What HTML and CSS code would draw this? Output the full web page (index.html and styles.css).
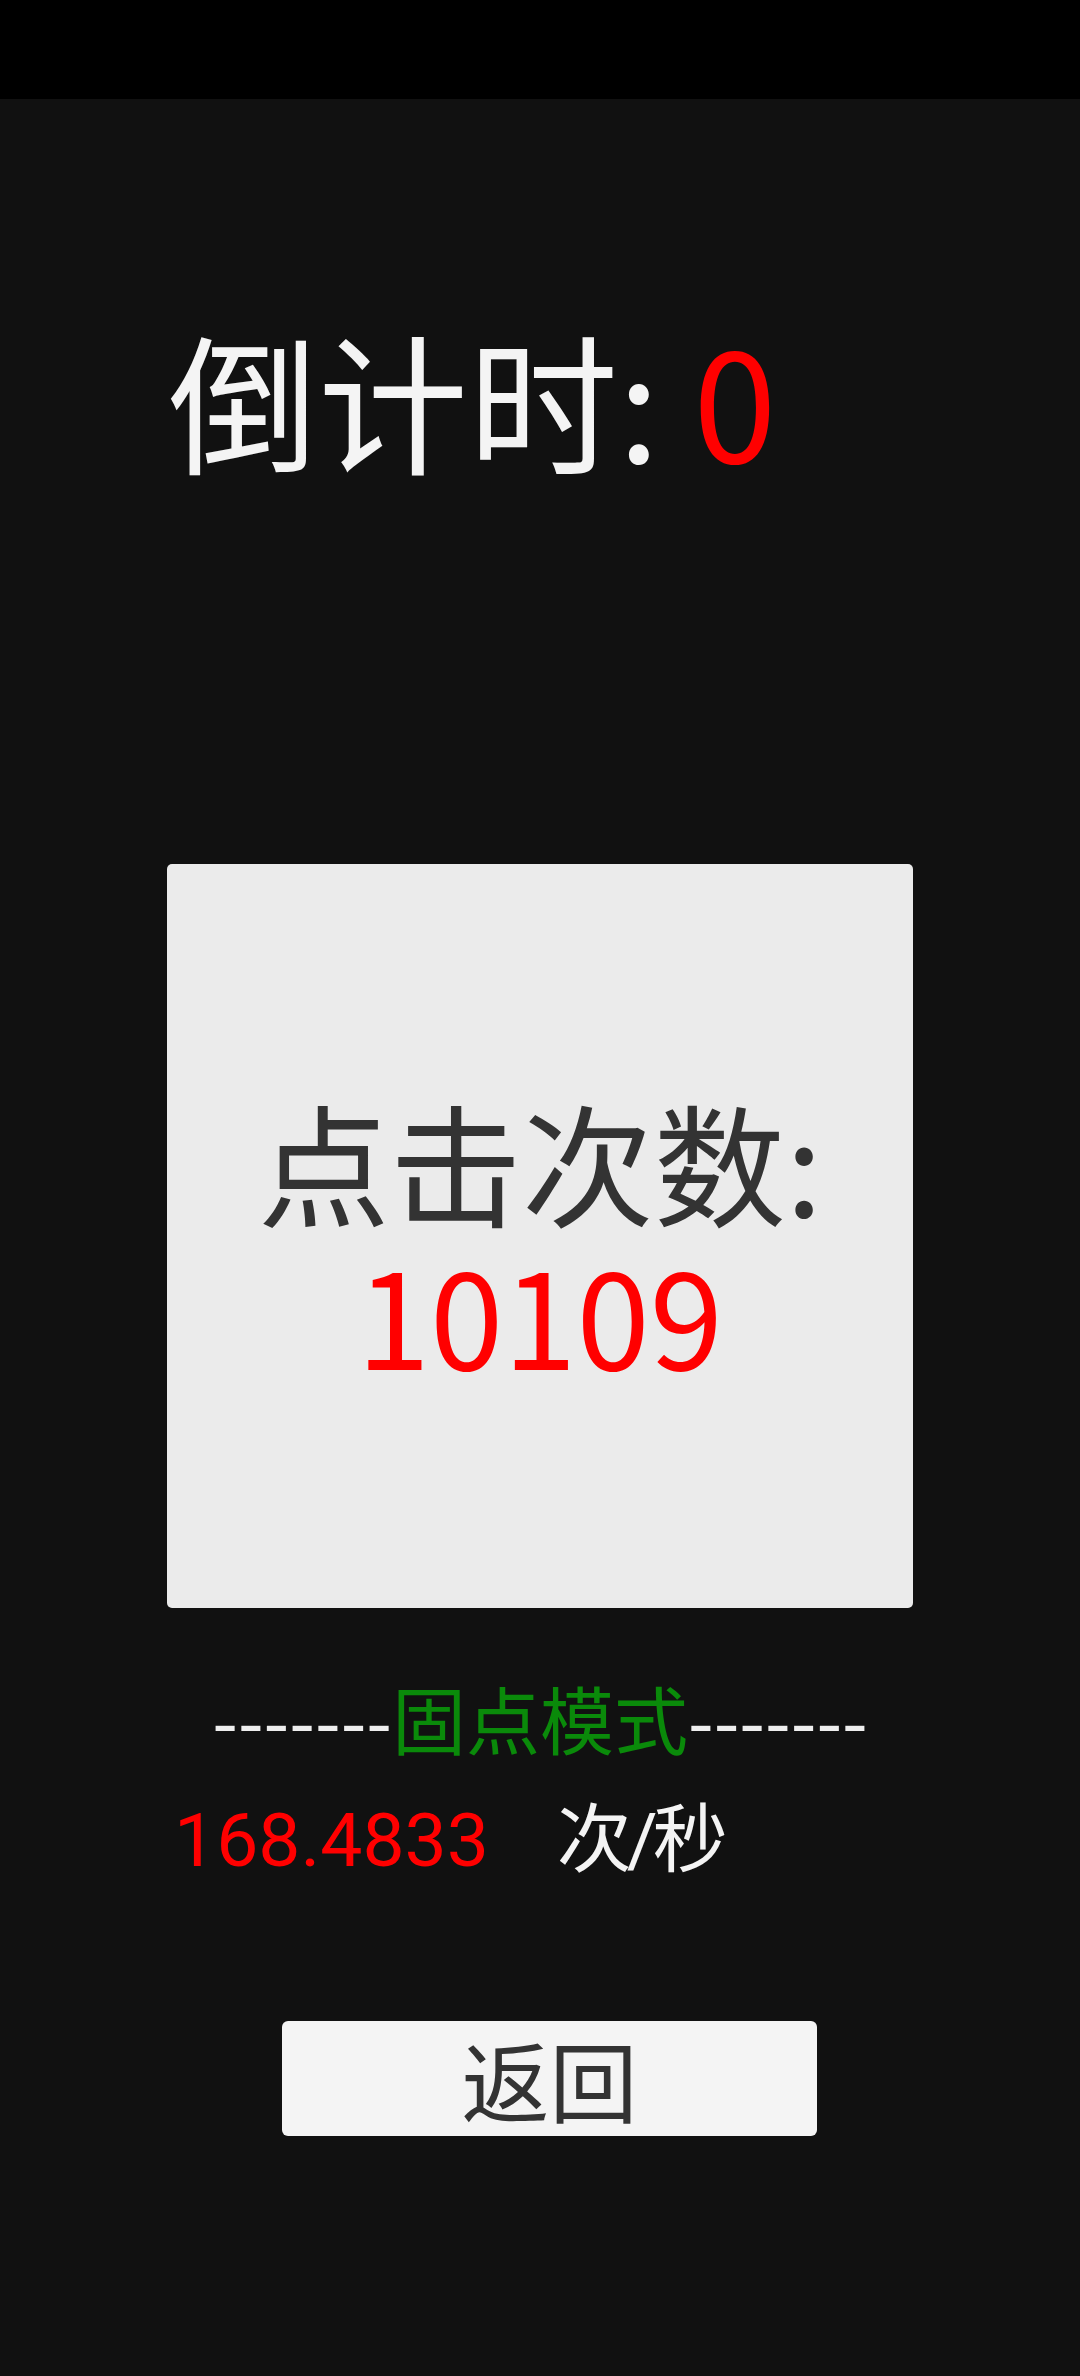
FILE: index.html
```html
<!DOCTYPE html>
<html lang="zh-CN">
<head>
<meta charset="utf-8">
<title>倒计时</title>
<link rel="stylesheet" href="styles.css">
</head>
<body>
<div class="status-bar"></div>
<main class="screen">
  <h1 class="countdown">倒计时: <span class="red">0</span></h1>
  <div class="card">
    <p class="card-text">点击次数:<br><span class="red">10109</span></p>
  </div>
  <div class="mode"><span class="dash">-------</span><span class="mode-name">固点模式</span><span class="dash">-------</span></div>
  <div class="speed"><span class="speed-num red">168.4833</span><span class="speed-unit">次/秒</span></div>
  <button class="back">返回</button>
</main>
</body>
</html>
```

FILE: styles.css
```css
html, body {
  margin: 0;
  padding: 0;
  background: #111111;
  font-family: "Noto Sans CJK SC", "Noto Sans", sans-serif;
}
.status-bar {
  height: 99px;
  background: #000000;
}
.screen {
  display: flex;
  flex-direction: column;
  align-items: flex-start;
}
.red { color: #ff0000; }
.countdown {
  margin: 0;
  padding: 209px 0 0 168px;
  font-size: 150px;
  font-weight: normal;
  line-height: 1.2;
  color: #f4f4f4;
  white-space: pre;
}
.card {
  margin: 376px 0 0 167px;
  width: 746px;
  height: 744px;
  background: #ebebeb;
  border-radius: 5px;
  display: flex;
  flex-direction: column;
  align-items: center;
  justify-content: center;
}
.card-text {
  margin: 0;
  text-align: center;
  font-size: 132px;
  line-height: 1.16;
  color: #333333;
}
.mode {
  align-self: center;
  margin-top: 65px;
  font-size: 74px;
  line-height: 1.2;
  white-space: pre;
}
.dash { color: #eeeeee; }
.mode-name { color: #0a8a0a; }
.speed {
  margin: 33px 0 0 174px;
  display: flex;
  align-items: baseline;
  gap: 68px;
  font-family: Roboto, "Noto Sans CJK SC", sans-serif;
  font-size: 75px;
  line-height: 1.2;
}
.speed-unit {
  color: #f4f4f4;
  letter-spacing: -5px;
}
.back {
  margin: 136px 0 0 282px;
  width: 535px;
  height: 115px;
  border: none;
  border-radius: 6px;
  background: #f4f4f4;
  color: #333333;
  font-family: "Noto Sans CJK SC", sans-serif;
  font-size: 88px;
  line-height: 1;
  padding: 0;
}
```
